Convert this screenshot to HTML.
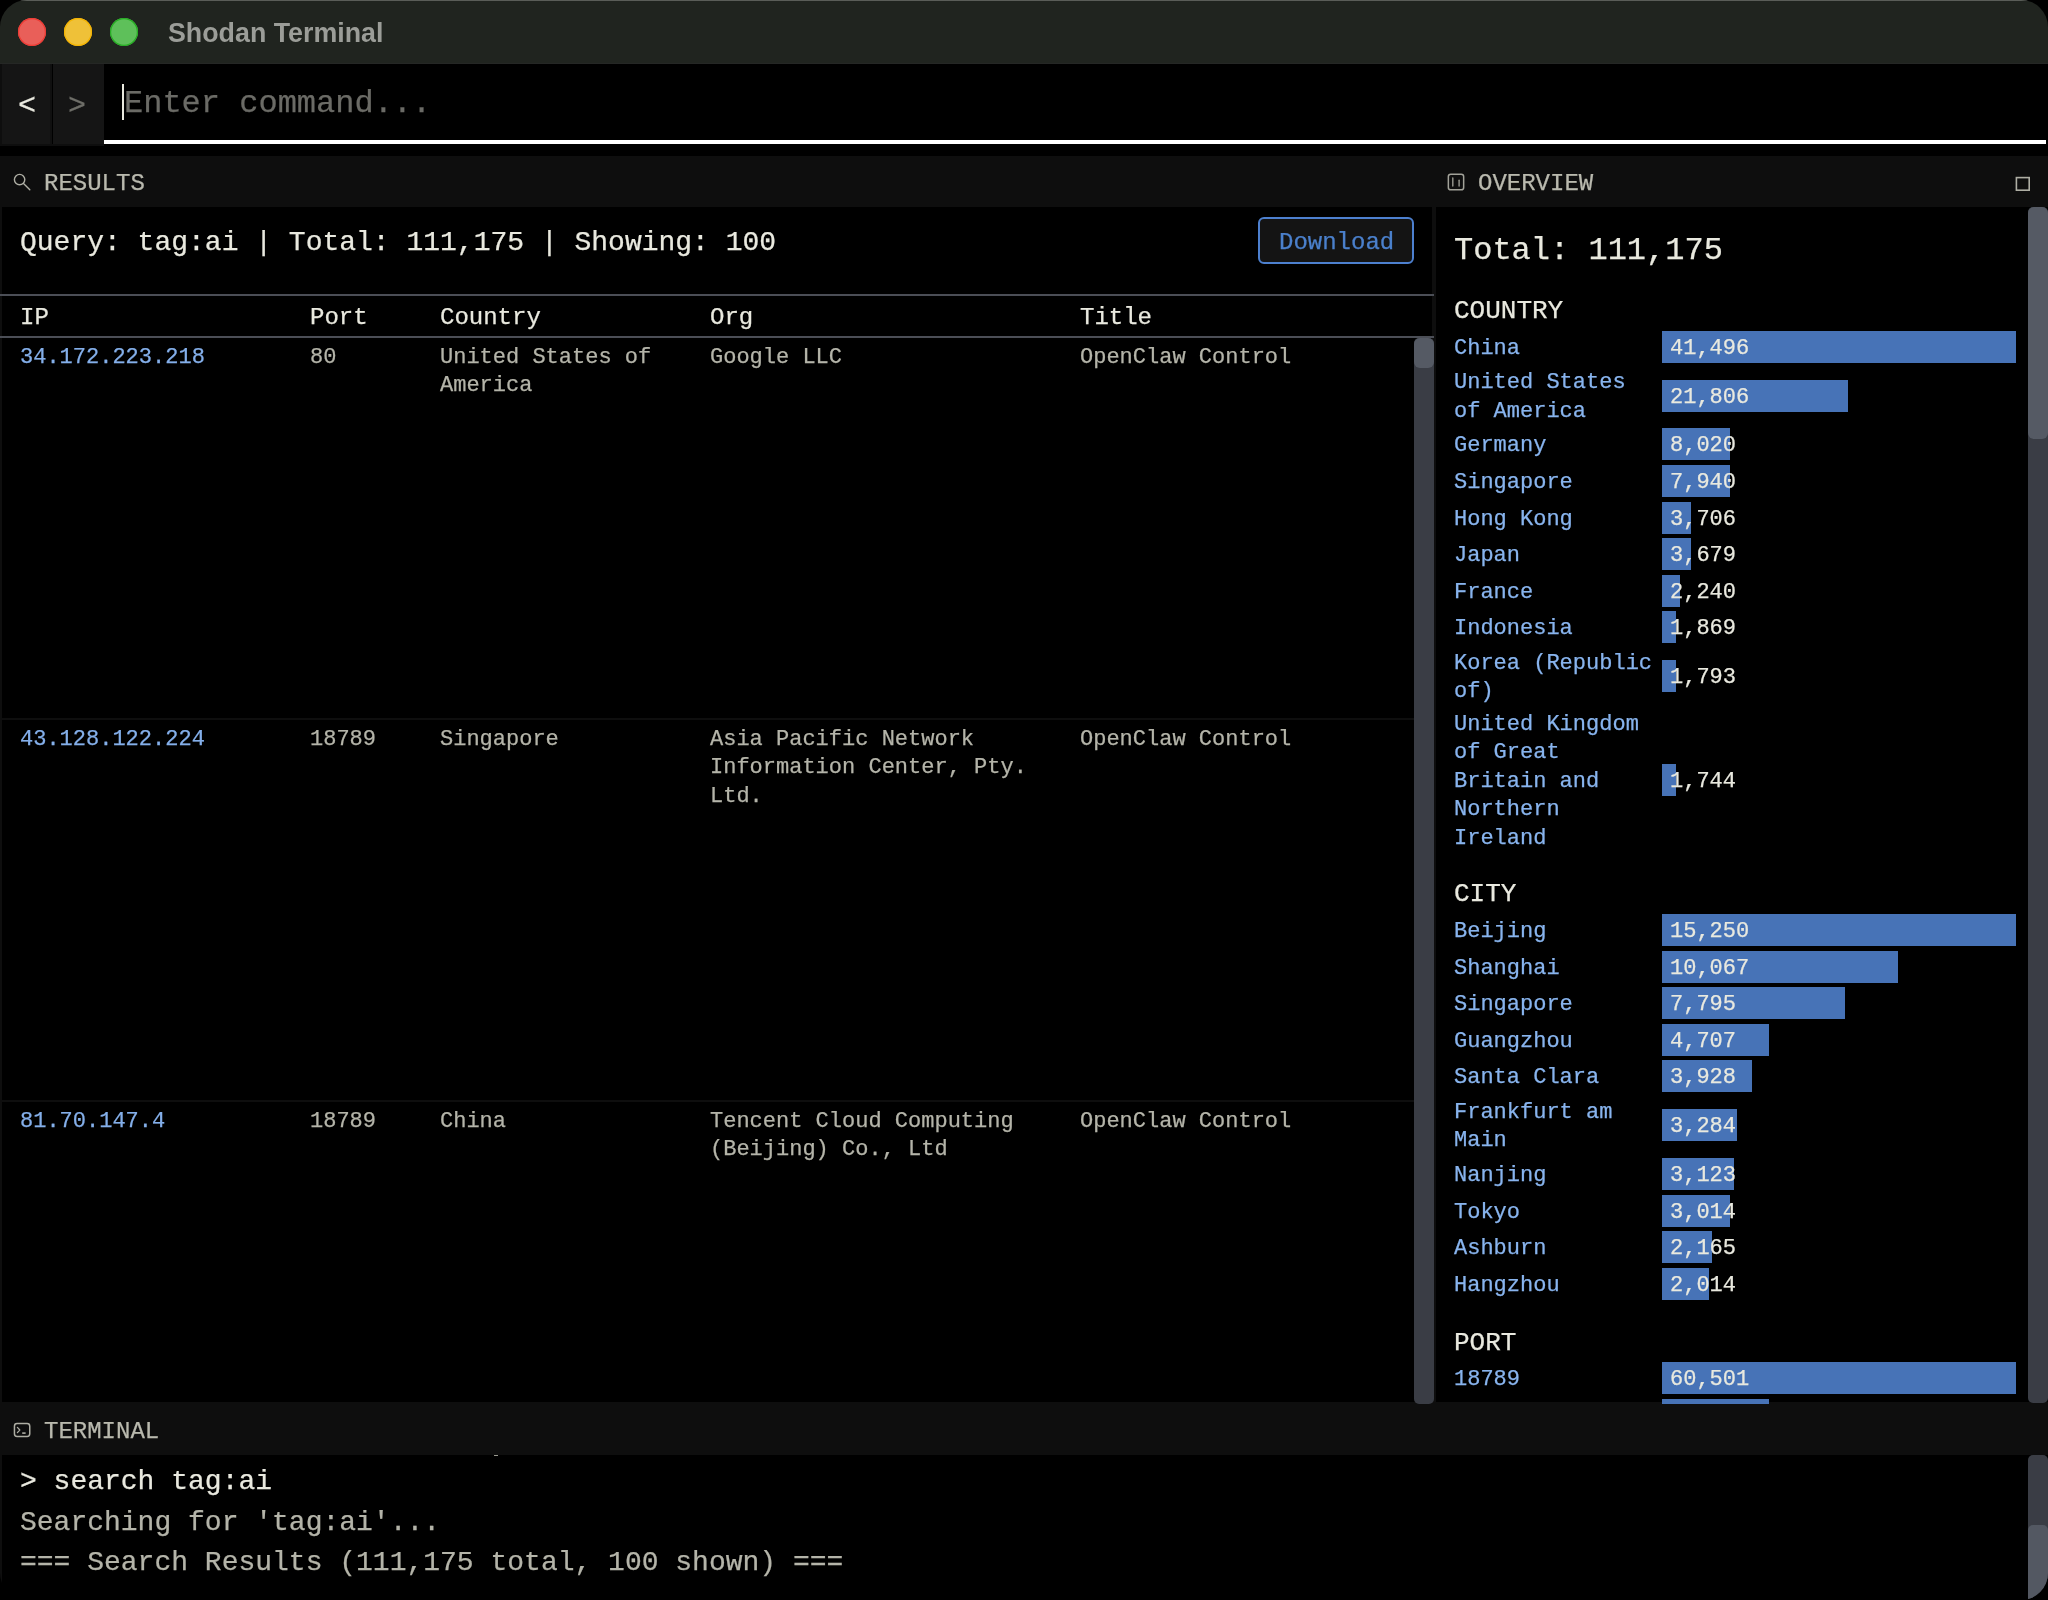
<!DOCTYPE html>
<html><head><meta charset="utf-8">
<style>
*{box-sizing:border-box;margin:0;padding:0}
html,body{width:2048px;height:1600px;overflow:hidden;background:#000}
body{font-family:"Liberation Mono",monospace;position:relative}
#win{position:absolute;left:0;top:0;width:2048px;height:1600px;border-radius:27px;overflow:hidden;background:#000}
.b{position:absolute}
.t{position:absolute;white-space:nowrap;will-change:transform;-webkit-text-stroke:0.25px currentColor}
#ov{position:absolute;left:1436px;top:207px;width:612px;height:1195px;overflow:hidden}
</style></head><body>
<div id="win">
<div class="b" style="left:0px;top:0px;width:2048px;height:64px;background:#20241f;"></div>
<div class="b" style="left:0px;top:63px;width:2048px;height:1px;background:#252725;"></div>
<div class="b" style="left:0px;top:0px;width:2048px;height:1px;background:#5a5d58;"></div>
<div class="b" style="left:18px;top:18px;width:28px;height:28px;background:#e95f59;border-radius:50%;box-shadow:inset 0 0 0 1.2px #ee3b34"></div>
<div class="b" style="left:64px;top:18px;width:28px;height:28px;background:#efc138;border-radius:50%;box-shadow:inset 0 0 0 1.2px #f5b400"></div>
<div class="b" style="left:110px;top:18px;width:28px;height:28px;background:#5ec05a;border-radius:50%;box-shadow:inset 0 0 0 1.2px #26ae23"></div>
<div class="t" style="left:168px;top:15px;font-family:'Liberation Sans',sans-serif;font-weight:bold;font-size:26.8px;line-height:36px;color:#9b9d98;-webkit-text-stroke:0">Shodan Terminal</div>
<div class="b" style="left:0px;top:64px;width:2px;height:80px;background:#0e0e0e;"></div>
<div class="b" style="left:2px;top:64px;width:48px;height:80px;background:#151515;"></div>
<div class="b" style="left:53px;top:64px;width:51px;height:80px;background:#151515;"></div>
<div class="t" style="left:18px;top:87px;font-size:30px;line-height:39.0px;color:#e9e9df;">&lt;</div>
<div class="t" style="left:68px;top:87px;font-size:30px;line-height:39.0px;color:#6e6e68;">&gt;</div>
<div class="b" style="left:104px;top:140px;width:1942px;height:4px;background:#ffffff;"></div>
<div class="b" style="left:0px;top:144px;width:104px;height:2px;background:#0e0e0e;"></div>
<div class="b" style="left:50px;top:64px;width:2px;height:80px;background:#101010;"></div>
<div class="b" style="left:122px;top:84px;width:2px;height:36px;background:#e9e9df;"></div>
<div class="t" style="left:124px;top:83px;font-size:32px;line-height:41.6px;color:#6b6b66;">Enter command...</div>
<div class="b" style="left:0px;top:156px;width:2048px;height:51px;background:#0e0e0e;"></div>
<div class="t" style="left:44px;top:168px;font-size:24px;line-height:31.2px;color:#b9b9ae;">RESULTS</div>
<div class="t" style="left:1478px;top:168px;font-size:24px;line-height:31.2px;color:#b9b9ae;">OVERVIEW</div>
<div class="b" style="left:0px;top:207px;width:2px;height:1195px;background:#0e0e0e;"></div>
<div class="b" style="left:1432px;top:207px;width:4px;height:1195px;background:#0e0e0e;"></div>
<div class="t" style="left:20px;top:225px;font-size:28px;line-height:36.4px;color:#e9e9df;">Query: tag:ai | Total: 111,175 | Showing: 100</div>
<div class="b" style="left:1258px;top:217px;width:156px;height:47px;background:#141414;border:2px solid #4d80cf;border-radius:6px;box-sizing:border-box"></div>
<div class="t" style="left:1279px;top:227px;font-size:24px;line-height:31.2px;color:#4b80cc;">Download</div>
<div class="b" style="left:0px;top:294px;width:1434px;height:2px;background:#4b4e56;"></div>
<div class="b" style="left:0px;top:336px;width:1434px;height:2px;background:#4b4e56;"></div>
<div class="t" style="left:20px;top:302px;font-size:24px;line-height:31.2px;color:#e9e9df;">IP</div>
<div class="t" style="left:310px;top:302px;font-size:24px;line-height:31.2px;color:#e9e9df;">Port</div>
<div class="t" style="left:440px;top:302px;font-size:24px;line-height:31.2px;color:#e9e9df;">Country</div>
<div class="t" style="left:710px;top:302px;font-size:24px;line-height:31.2px;color:#e9e9df;">Org</div>
<div class="t" style="left:1080px;top:302px;font-size:24px;line-height:31.2px;color:#e9e9df;">Title</div>
<div class="b" style="left:0px;top:718px;width:1414px;height:2px;background:#0e0e0e;"></div>
<div class="b" style="left:0px;top:1100px;width:1414px;height:2px;background:#0e0e0e;"></div>
<div class="t" style="left:20px;top:344px;font-size:22px;line-height:28.6px;color:#84afea;">34.172.223.218</div>
<div class="t" style="left:310px;top:344px;font-size:22px;line-height:28.6px;color:#b4b4a9;">80</div>
<div class="t" style="left:440px;top:344px;font-size:22px;line-height:28.6px;color:#b4b4a9;">United States of</div>
<div class="t" style="left:440px;top:372px;font-size:22px;line-height:28.6px;color:#b4b4a9;">America</div>
<div class="t" style="left:710px;top:344px;font-size:22px;line-height:28.6px;color:#b4b4a9;">Google LLC</div>
<div class="t" style="left:1080px;top:344px;font-size:22px;line-height:28.6px;color:#b4b4a9;">OpenClaw Control</div>
<div class="t" style="left:20px;top:726px;font-size:22px;line-height:28.6px;color:#84afea;">43.128.122.224</div>
<div class="t" style="left:310px;top:726px;font-size:22px;line-height:28.6px;color:#b4b4a9;">18789</div>
<div class="t" style="left:440px;top:726px;font-size:22px;line-height:28.6px;color:#b4b4a9;">Singapore</div>
<div class="t" style="left:710px;top:726px;font-size:22px;line-height:28.6px;color:#b4b4a9;">Asia Pacific Network</div>
<div class="t" style="left:710px;top:754px;font-size:22px;line-height:28.6px;color:#b4b4a9;">Information Center, Pty.</div>
<div class="t" style="left:710px;top:783px;font-size:22px;line-height:28.6px;color:#b4b4a9;">Ltd.</div>
<div class="t" style="left:1080px;top:726px;font-size:22px;line-height:28.6px;color:#b4b4a9;">OpenClaw Control</div>
<div class="t" style="left:20px;top:1108px;font-size:22px;line-height:28.6px;color:#84afea;">81.70.147.4</div>
<div class="t" style="left:310px;top:1108px;font-size:22px;line-height:28.6px;color:#b4b4a9;">18789</div>
<div class="t" style="left:440px;top:1108px;font-size:22px;line-height:28.6px;color:#b4b4a9;">China</div>
<div class="t" style="left:710px;top:1108px;font-size:22px;line-height:28.6px;color:#b4b4a9;">Tencent Cloud Computing</div>
<div class="t" style="left:710px;top:1136px;font-size:22px;line-height:28.6px;color:#b4b4a9;">(Beijing) Co., Ltd</div>
<div class="t" style="left:1080px;top:1108px;font-size:22px;line-height:28.6px;color:#b4b4a9;">OpenClaw Control</div>
<div class="b" style="left:0px;top:1402px;width:2048px;height:53px;background:#0e0e0e;"></div>
<div class="b" style="left:1414px;top:338px;width:20px;height:1066px;background:#3a3d45;border-radius:5px"></div>
<div class="b" style="left:1414px;top:338px;width:20px;height:30px;background:#555a64;border-radius:6px"></div>
<div class="t" style="left:1454px;top:230px;font-size:32px;line-height:41.6px;color:#e9e9df;">Total: 111,175</div>
<div class="t" style="left:1454px;top:295px;font-size:26px;line-height:33.8px;color:#e9e9df;">COUNTRY</div>
<div class="t" style="left:1454px;top:335px;font-size:22px;line-height:28.6px;color:#88b4ee;">China</div>
<div class="b" style="left:1662px;top:331px;width:354px;height:32px;background:#4773b7;"></div>
<div class="t" style="left:1670px;top:335px;font-size:22px;line-height:28.6px;color:#e9e9df;">41,496</div>
<div class="t" style="left:1454px;top:369px;font-size:22px;line-height:28.6px;color:#88b4ee;">United States</div>
<div class="t" style="left:1454px;top:398px;font-size:22px;line-height:28.6px;color:#88b4ee;">of America</div>
<div class="b" style="left:1662px;top:380px;width:186px;height:32px;background:#4773b7;"></div>
<div class="t" style="left:1670px;top:384px;font-size:22px;line-height:28.6px;color:#e9e9df;">21,806</div>
<div class="t" style="left:1454px;top:432px;font-size:22px;line-height:28.6px;color:#88b4ee;">Germany</div>
<div class="b" style="left:1662px;top:428px;width:68px;height:32px;background:#4773b7;"></div>
<div class="t" style="left:1670px;top:432px;font-size:22px;line-height:28.6px;color:#e9e9df;">8,020</div>
<div class="t" style="left:1454px;top:469px;font-size:22px;line-height:28.6px;color:#88b4ee;">Singapore</div>
<div class="b" style="left:1662px;top:465px;width:68px;height:32px;background:#4773b7;"></div>
<div class="t" style="left:1670px;top:469px;font-size:22px;line-height:28.6px;color:#e9e9df;">7,940</div>
<div class="t" style="left:1454px;top:506px;font-size:22px;line-height:28.6px;color:#88b4ee;">Hong Kong</div>
<div class="b" style="left:1662px;top:502px;width:29px;height:32px;background:#4773b7;"></div>
<div class="t" style="left:1670px;top:506px;font-size:22px;line-height:28.6px;color:#e9e9df;">3,706</div>
<div class="t" style="left:1454px;top:542px;font-size:22px;line-height:28.6px;color:#88b4ee;">Japan</div>
<div class="b" style="left:1662px;top:538px;width:29px;height:32px;background:#4773b7;"></div>
<div class="t" style="left:1670px;top:542px;font-size:22px;line-height:28.6px;color:#e9e9df;">3,679</div>
<div class="t" style="left:1454px;top:579px;font-size:22px;line-height:28.6px;color:#88b4ee;">France</div>
<div class="b" style="left:1662px;top:575px;width:18px;height:32px;background:#4773b7;"></div>
<div class="t" style="left:1670px;top:579px;font-size:22px;line-height:28.6px;color:#e9e9df;">2,240</div>
<div class="t" style="left:1454px;top:615px;font-size:22px;line-height:28.6px;color:#88b4ee;">Indonesia</div>
<div class="b" style="left:1662px;top:611px;width:14px;height:32px;background:#4773b7;"></div>
<div class="t" style="left:1670px;top:615px;font-size:22px;line-height:28.6px;color:#e9e9df;">1,869</div>
<div class="t" style="left:1454px;top:650px;font-size:22px;line-height:28.6px;color:#88b4ee;">Korea (Republic</div>
<div class="t" style="left:1454px;top:678px;font-size:22px;line-height:28.6px;color:#88b4ee;">of)</div>
<div class="b" style="left:1662px;top:660px;width:14px;height:32px;background:#4773b7;"></div>
<div class="t" style="left:1670px;top:664px;font-size:22px;line-height:28.6px;color:#e9e9df;">1,793</div>
<div class="t" style="left:1454px;top:711px;font-size:22px;line-height:28.6px;color:#88b4ee;">United Kingdom</div>
<div class="t" style="left:1454px;top:739px;font-size:22px;line-height:28.6px;color:#88b4ee;">of Great</div>
<div class="t" style="left:1454px;top:768px;font-size:22px;line-height:28.6px;color:#88b4ee;">Britain and</div>
<div class="t" style="left:1454px;top:796px;font-size:22px;line-height:28.6px;color:#88b4ee;">Northern</div>
<div class="t" style="left:1454px;top:825px;font-size:22px;line-height:28.6px;color:#88b4ee;">Ireland</div>
<div class="b" style="left:1662px;top:764px;width:14px;height:32px;background:#4773b7;"></div>
<div class="t" style="left:1670px;top:768px;font-size:22px;line-height:28.6px;color:#e9e9df;">1,744</div>
<div class="t" style="left:1454px;top:878px;font-size:26px;line-height:33.8px;color:#e9e9df;">CITY</div>
<div class="t" style="left:1454px;top:918px;font-size:22px;line-height:28.6px;color:#88b4ee;">Beijing</div>
<div class="b" style="left:1662px;top:914px;width:354px;height:32px;background:#4773b7;"></div>
<div class="t" style="left:1670px;top:918px;font-size:22px;line-height:28.6px;color:#e9e9df;">15,250</div>
<div class="t" style="left:1454px;top:955px;font-size:22px;line-height:28.6px;color:#88b4ee;">Shanghai</div>
<div class="b" style="left:1662px;top:951px;width:236px;height:32px;background:#4773b7;"></div>
<div class="t" style="left:1670px;top:955px;font-size:22px;line-height:28.6px;color:#e9e9df;">10,067</div>
<div class="t" style="left:1454px;top:991px;font-size:22px;line-height:28.6px;color:#88b4ee;">Singapore</div>
<div class="b" style="left:1662px;top:987px;width:183px;height:32px;background:#4773b7;"></div>
<div class="t" style="left:1670px;top:991px;font-size:22px;line-height:28.6px;color:#e9e9df;">7,795</div>
<div class="t" style="left:1454px;top:1028px;font-size:22px;line-height:28.6px;color:#88b4ee;">Guangzhou</div>
<div class="b" style="left:1662px;top:1024px;width:107px;height:32px;background:#4773b7;"></div>
<div class="t" style="left:1670px;top:1028px;font-size:22px;line-height:28.6px;color:#e9e9df;">4,707</div>
<div class="t" style="left:1454px;top:1064px;font-size:22px;line-height:28.6px;color:#88b4ee;">Santa Clara</div>
<div class="b" style="left:1662px;top:1060px;width:90px;height:32px;background:#4773b7;"></div>
<div class="t" style="left:1670px;top:1064px;font-size:22px;line-height:28.6px;color:#e9e9df;">3,928</div>
<div class="t" style="left:1454px;top:1099px;font-size:22px;line-height:28.6px;color:#88b4ee;">Frankfurt am</div>
<div class="t" style="left:1454px;top:1127px;font-size:22px;line-height:28.6px;color:#88b4ee;">Main</div>
<div class="b" style="left:1662px;top:1109px;width:75px;height:32px;background:#4773b7;"></div>
<div class="t" style="left:1670px;top:1113px;font-size:22px;line-height:28.6px;color:#e9e9df;">3,284</div>
<div class="t" style="left:1454px;top:1162px;font-size:22px;line-height:28.6px;color:#88b4ee;">Nanjing</div>
<div class="b" style="left:1662px;top:1158px;width:72px;height:32px;background:#4773b7;"></div>
<div class="t" style="left:1670px;top:1162px;font-size:22px;line-height:28.6px;color:#e9e9df;">3,123</div>
<div class="t" style="left:1454px;top:1199px;font-size:22px;line-height:28.6px;color:#88b4ee;">Tokyo</div>
<div class="b" style="left:1662px;top:1195px;width:68px;height:32px;background:#4773b7;"></div>
<div class="t" style="left:1670px;top:1199px;font-size:22px;line-height:28.6px;color:#e9e9df;">3,014</div>
<div class="t" style="left:1454px;top:1235px;font-size:22px;line-height:28.6px;color:#88b4ee;">Ashburn</div>
<div class="b" style="left:1662px;top:1231px;width:50px;height:32px;background:#4773b7;"></div>
<div class="t" style="left:1670px;top:1235px;font-size:22px;line-height:28.6px;color:#e9e9df;">2,165</div>
<div class="t" style="left:1454px;top:1272px;font-size:22px;line-height:28.6px;color:#88b4ee;">Hangzhou</div>
<div class="b" style="left:1662px;top:1268px;width:47px;height:32px;background:#4773b7;"></div>
<div class="t" style="left:1670px;top:1272px;font-size:22px;line-height:28.6px;color:#e9e9df;">2,014</div>
<div class="t" style="left:1454px;top:1327px;font-size:26px;line-height:33.8px;color:#e9e9df;">PORT</div>
<div class="t" style="left:1454px;top:1366px;font-size:22px;line-height:28.6px;color:#88b4ee;">18789</div>
<div class="b" style="left:1662px;top:1362px;width:354px;height:32px;background:#4773b7;"></div>
<div class="t" style="left:1670px;top:1366px;font-size:22px;line-height:28.6px;color:#e9e9df;">60,501</div>
<div class="t" style="left:1454px;top:1403px;font-size:22px;line-height:28.6px;color:#88b4ee;"></div>
<div class="b" style="left:1662px;top:1399px;width:107px;height:5px;background:#4773b7;"></div>
<div class="b" style="left:2028px;top:207px;width:20px;height:1196.4px;background:#3a3d45;border-radius:5px"></div>
<div class="b" style="left:2028px;top:207px;width:20px;height:232px;background:#555a64;border-radius:6px"></div>
<div class="t" style="left:44px;top:1416px;font-size:24px;line-height:31.2px;color:#b9b9ae;">TERMINAL</div>
<div class="b" style="left:0px;top:1455px;width:2px;height:145px;background:#0e0e0e;"></div>
<div class="b" style="left:494px;top:1455px;width:4px;height:1px;background:#9a9a90;"></div>
<div class="t" style="left:20px;top:1464px;font-size:28px;line-height:36.4px;color:#e9e9df;">&gt; search tag:ai</div>
<div class="t" style="left:20px;top:1505px;font-size:28px;line-height:36.4px;color:#b4b4a9;">Searching for 'tag:ai'...</div>
<div class="t" style="left:20px;top:1545px;font-size:28px;line-height:36.4px;color:#b4b4a9;">=== Search Results (111,175 total, 100 shown) ===</div>
<div class="b" style="left:2028px;top:1455px;width:20px;height:145px;background:#3a3d45;border-radius:5px 5px 0 0"></div>
<div class="b" style="left:2028px;top:1525px;width:20px;height:75px;background:#535862;border-radius:5px 5px 0 0"></div>
<svg class="b" style="left:0;top:0" width="2048" height="1600" viewBox="0 0 2048 1600" fill="none" stroke="#aeaea4"><circle cx="19.6" cy="179.6" r="5.2" stroke-width="1.4"/><line x1="23.5" y1="183.5" x2="29.8" y2="189.8" stroke-width="1.4" stroke-linecap="round"/><rect x="1448.35" y="174.15" width="15.3" height="15.7" rx="2.4" stroke-width="1.5" stroke="#a2a299"/><line x1="1452.8" y1="177.9" x2="1452.8" y2="186.1" stroke-width="1.4" stroke-linecap="round" stroke="#9a9a91"/><line x1="1459.1" y1="180.3" x2="1459.1" y2="186.1" stroke-width="1.4" stroke-linecap="round" stroke="#9a9a91"/><rect x="14.45" y="1423.55" width="15.3" height="12.9" rx="2.6" stroke-width="1.5"/><polyline points="17.4,1427.4 19.8,1430 17.4,1432.6" stroke-width="1.3" stroke-linecap="round" stroke-linejoin="round"/><line x1="22.2" y1="1433.1" x2="25.6" y2="1433.1" stroke-width="1.6"/><rect x="2016.4" y="177.6" width="12.8" height="12.6" stroke-width="1.6"/></svg>
</div>
</body></html>
